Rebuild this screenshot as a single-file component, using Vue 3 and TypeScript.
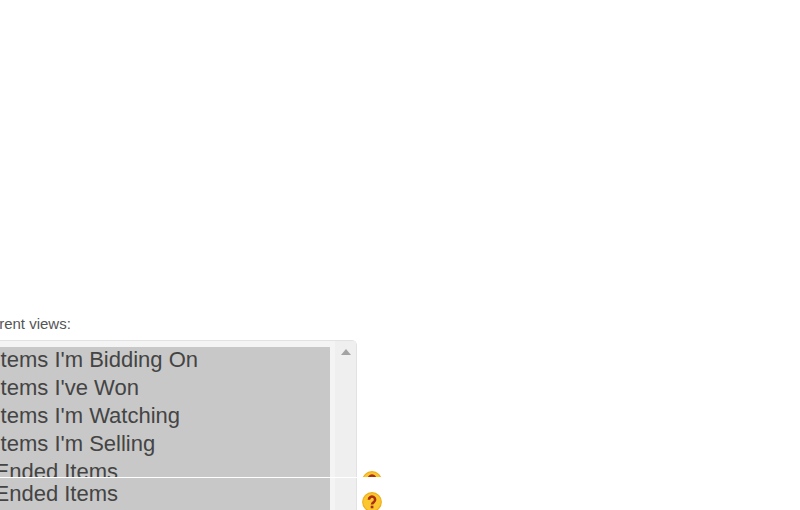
<script setup lang="ts">
const views: string[] = ["Items I'm Bidding On", "Items I've Won", "Items I'm Watching", "Items I'm Selling", 'Ended Items']
</script>

<template>
  <main class="stage">
    <section class="pane top">
      <p class="label">Current views:</p>
      <div class="row-wrap">
        <div class="listbox">
          <ul class="options">
            <li v-for="v in views" :key="v">{{ v }}</li>
          </ul>
          <div class="scrollbar"><span class="arrow"></span></div>
        </div>
        <svg class="help help-top" viewBox="0 0 20 20" aria-hidden="true">
          <circle cx="10" cy="10" r="9.3" fill="#fcc72e" stroke="#eeae1c" stroke-width="1.2" />
          <path d="M6.9 7.7a3.1 3.1 0 1 1 4.9 2.5c-1.2.8-1.8 1.2-1.8 2.4" fill="none" stroke="#a92f14" stroke-width="2.6" />
          <rect x="8.7" y="13.7" width="2.7" height="2.6" fill="#a92f14" />
        </svg>
      </div>
    </section>
    <section class="pane bottom">
      <div class="row-wrap">
        <div class="listbox flat">
          <ul class="options">
            <li>Ended Items</li>
          </ul>
          <div class="scrollbar"></div>
        </div>
        <svg class="help" viewBox="0 0 20 20" aria-hidden="true">
          <circle cx="10" cy="10" r="9.3" fill="#fcc72e" stroke="#eeae1c" stroke-width="1.2" />
          <path d="M6.9 7.7a3.1 3.1 0 1 1 4.9 2.5c-1.2.8-1.8 1.2-1.8 2.4" fill="none" stroke="#a92f14" stroke-width="2.6" />
          <rect x="8.7" y="13.7" width="2.7" height="2.6" fill="#a92f14" />
        </svg>
      </div>
    </section>
  </main>
</template>

<style scoped>
.stage {
  width: 800px;
  height: 510px;
  overflow: hidden;
  display: flex;
  flex-direction: column;
  background: #fff;
  font-family: "Liberation Sans", Arial, sans-serif;
}
.pane { flex: none; overflow: hidden; margin-left: -28px; }
.top { height: 477px; padding-top: 316px; box-sizing: border-box; }
.bottom { height: 33px; border-top: 1px solid #fff; box-sizing: border-box; }
.label { margin: 0 0 8px 3px; font-size: 15px; line-height: 16px; color: #555; }
.row-wrap { display: flex; align-items: flex-start; }
.listbox {
  width: 385px;
  height: 300px;
  flex: none;
  box-sizing: border-box;
  border: 1px solid #e2e2e2;
  border-radius: 5px;
  display: flex;
  background: #f4f4f4;
}
.listbox.flat { border-width: 0 1px; border-radius: 0; height: 40px; }
.options {
  list-style: none;
  margin: 6px 5px 0 0;
  padding: 0 0 0 21.5px;
  width: 357px;
  box-sizing: border-box;
  background: #c8c8c8;
  flex: none;
}
.flat .options { margin-top: 0; padding-top: 3px; }
.options li { font-size: 22px; line-height: 26px; padding-bottom: 2px; color: #444; white-space: nowrap; }
.scrollbar { flex: 1; background: #efefef; display: flex; justify-content: center; padding-top: 8px; }
.arrow { width: 0; height: 0; border: 5px solid transparent; border-top: 0; border-bottom: 6px solid #a3a3a3; }
.help { width: 20px; height: 20px; flex: none; margin: 14px 0 0 5px; }
.help-top { margin-top: 131px; }
</style>
